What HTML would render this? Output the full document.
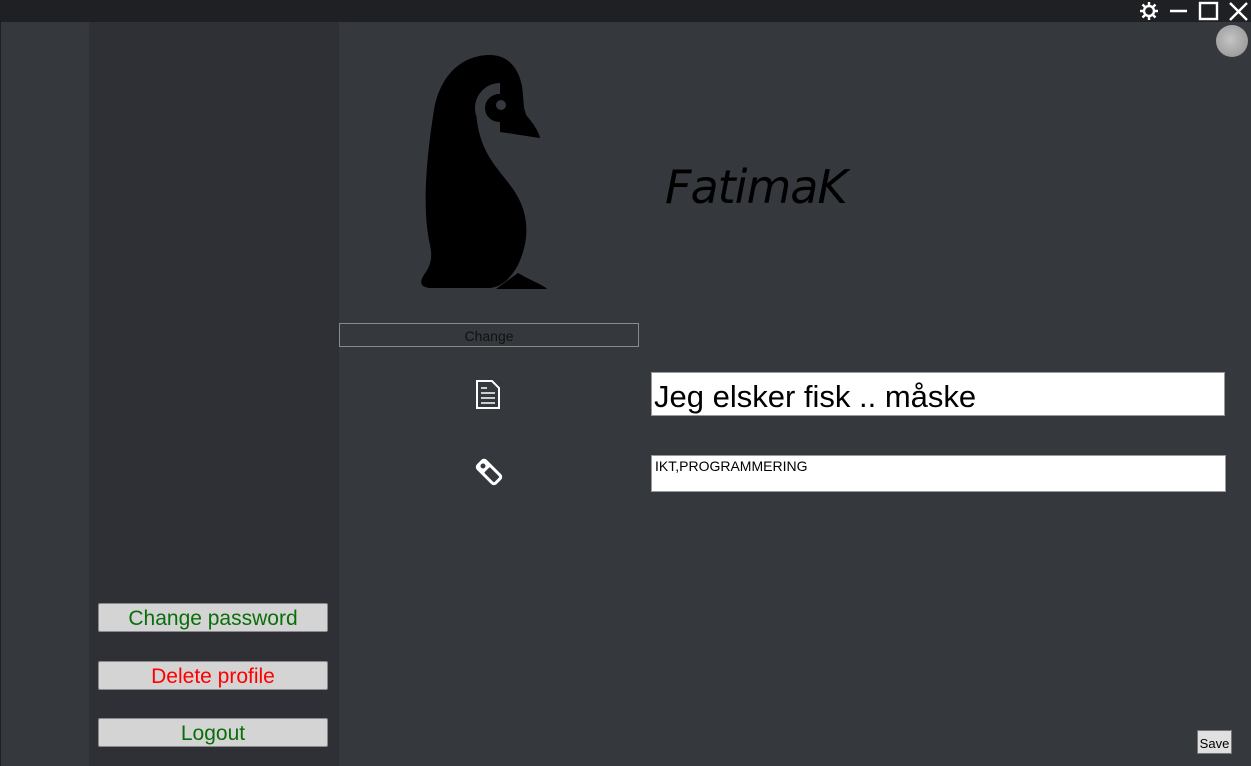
<!DOCTYPE html>
<html><head><meta charset="utf-8"><style>
body{margin:0;width:1251px;height:766px;background:#35383d;position:relative;overflow:hidden;font-family:"Liberation Sans",sans-serif}
.a{position:absolute}
.btn{position:absolute;left:98px;width:228px;height:27px;background:#d4d4d4;border:1px solid #8a8a8a;border-radius:2px;text-align:center;font-size:21px;line-height:29px}
</style></head><body>
<div class="a" style="left:0;top:0;width:1251px;height:22px;background:#1f2023"></div>
<div class="a" style="left:0;top:22px;width:1px;height:744px;background:#1f2023"></div>
<div class="a" style="left:89px;top:22px;width:250px;height:744px;background:#2e3035"></div>
<svg class="a" style="left:1136px;top:0" width="115" height="22" viewBox="0 0 115 22" fill="none" stroke="#fff" stroke-width="2.4">
<circle cx="13" cy="11" r="5"/><path d="M13 2v4M13 16v4M4 11h4M18 11h4M6.5 4.5l3 3M16.5 14.5l3 3M6.5 17.5l3-3M16.5 7.5l3-3"/>
<path d="M34 11h17"/><rect x="64" y="3" width="17" height="16"/><path d="M94 3l17 17M111 3l-17 17"/></svg>
<div class="a" style="left:1216px;top:25px;width:32px;height:32px;border-radius:50%;background:radial-gradient(circle at 45% 45%,#c4c4c4,#8e8e8e)"></div>
<svg class="a" style="left:400px;top:40px" width="180" height="260" viewBox="0 0 180 260">
<path fill="#000" d="M76 70 C78 110 95 125 110 145 C128 168 132 195 118 225 C110 240 100 247 90 248 L30 248 C18 247 20 240 26 232 C32 222 32 215 30 205 C22 170 26 120 34 70 C40 35 62 15 90 15 C114 15 124 38 123 62 L126 75 C132 82 138 90 140 98 L114 94 Z"/>
<circle cx="100" cy="68" r="25" fill="#35383d"/>
<path fill="#000" d="M100 42 L112 44 L123 55 L124 68 L126 75 C132 82 138 90 140 98 L114 94 L100 92Z"/>
<circle cx="99" cy="68" r="14" fill="#000"/>
<circle cx="101" cy="65" r="5" fill="#35383d"/>
<path fill="#000" d="M118 233 L96 249 L147 249 C145 246 130 240 118 233Z"/>
</svg>
<div class="a" style="left:665px;top:160px;font-size:46px;font-style:italic;color:#000;font-family:'DejaVu Sans','Liberation Sans',sans-serif;font-weight:300;letter-spacing:-1px">FatimaK</div>
<div class="a" style="left:339px;top:323px;width:298px;height:22px;border:1px solid #8a8a8a;text-align:center;font-size:14px;line-height:25px;color:#111">Change</div>
<svg class="a" style="left:474px;top:378px" width="28" height="34" viewBox="0 0 28 34" fill="none" stroke="#fff" stroke-width="2"><path d="M3 3h15l7 7v20H3z"/><path d="M7 10h6M7 15h14M7 20h14M7 25h14" stroke-width="1.6"/></svg>
<svg class="a" style="left:472px;top:455px" width="34" height="34" viewBox="0 0 34 34"><g transform="rotate(-45 17 17)"><rect x="10" y="3" width="14" height="28" rx="4" fill="#fff"/><rect x="13" y="14" width="8" height="14" rx="1" fill="#35383d"/><circle cx="17" cy="8.5" r="2.5" fill="#35383d"/></g></svg>
<div class="a" style="left:651px;top:372px;width:570px;height:42px;background:#fff;border:1px solid #999;font-size:31px;line-height:48px;padding-left:2px;color:#000">Jeg elsker fisk .. måske</div>
<div class="a" style="left:651px;top:455px;width:570px;height:35px;background:#fff;border:1px solid #999;font-size:14px;line-height:20px;padding-left:3px;color:#000">IKT,PROGRAMMERING</div>
<div class="btn" style="top:603px;color:#0a6e0a">Change password</div>
<div class="btn" style="top:661px;color:#f00">Delete profile</div>
<div class="btn" style="top:718px;color:#0a6e0a">Logout</div>
<div class="a" style="left:1197px;top:730px;width:33px;height:22px;background:#e0e0e0;border:1px solid #777;font-size:13px;line-height:25px;text-align:center;color:#000">Save</div>
</body></html>
